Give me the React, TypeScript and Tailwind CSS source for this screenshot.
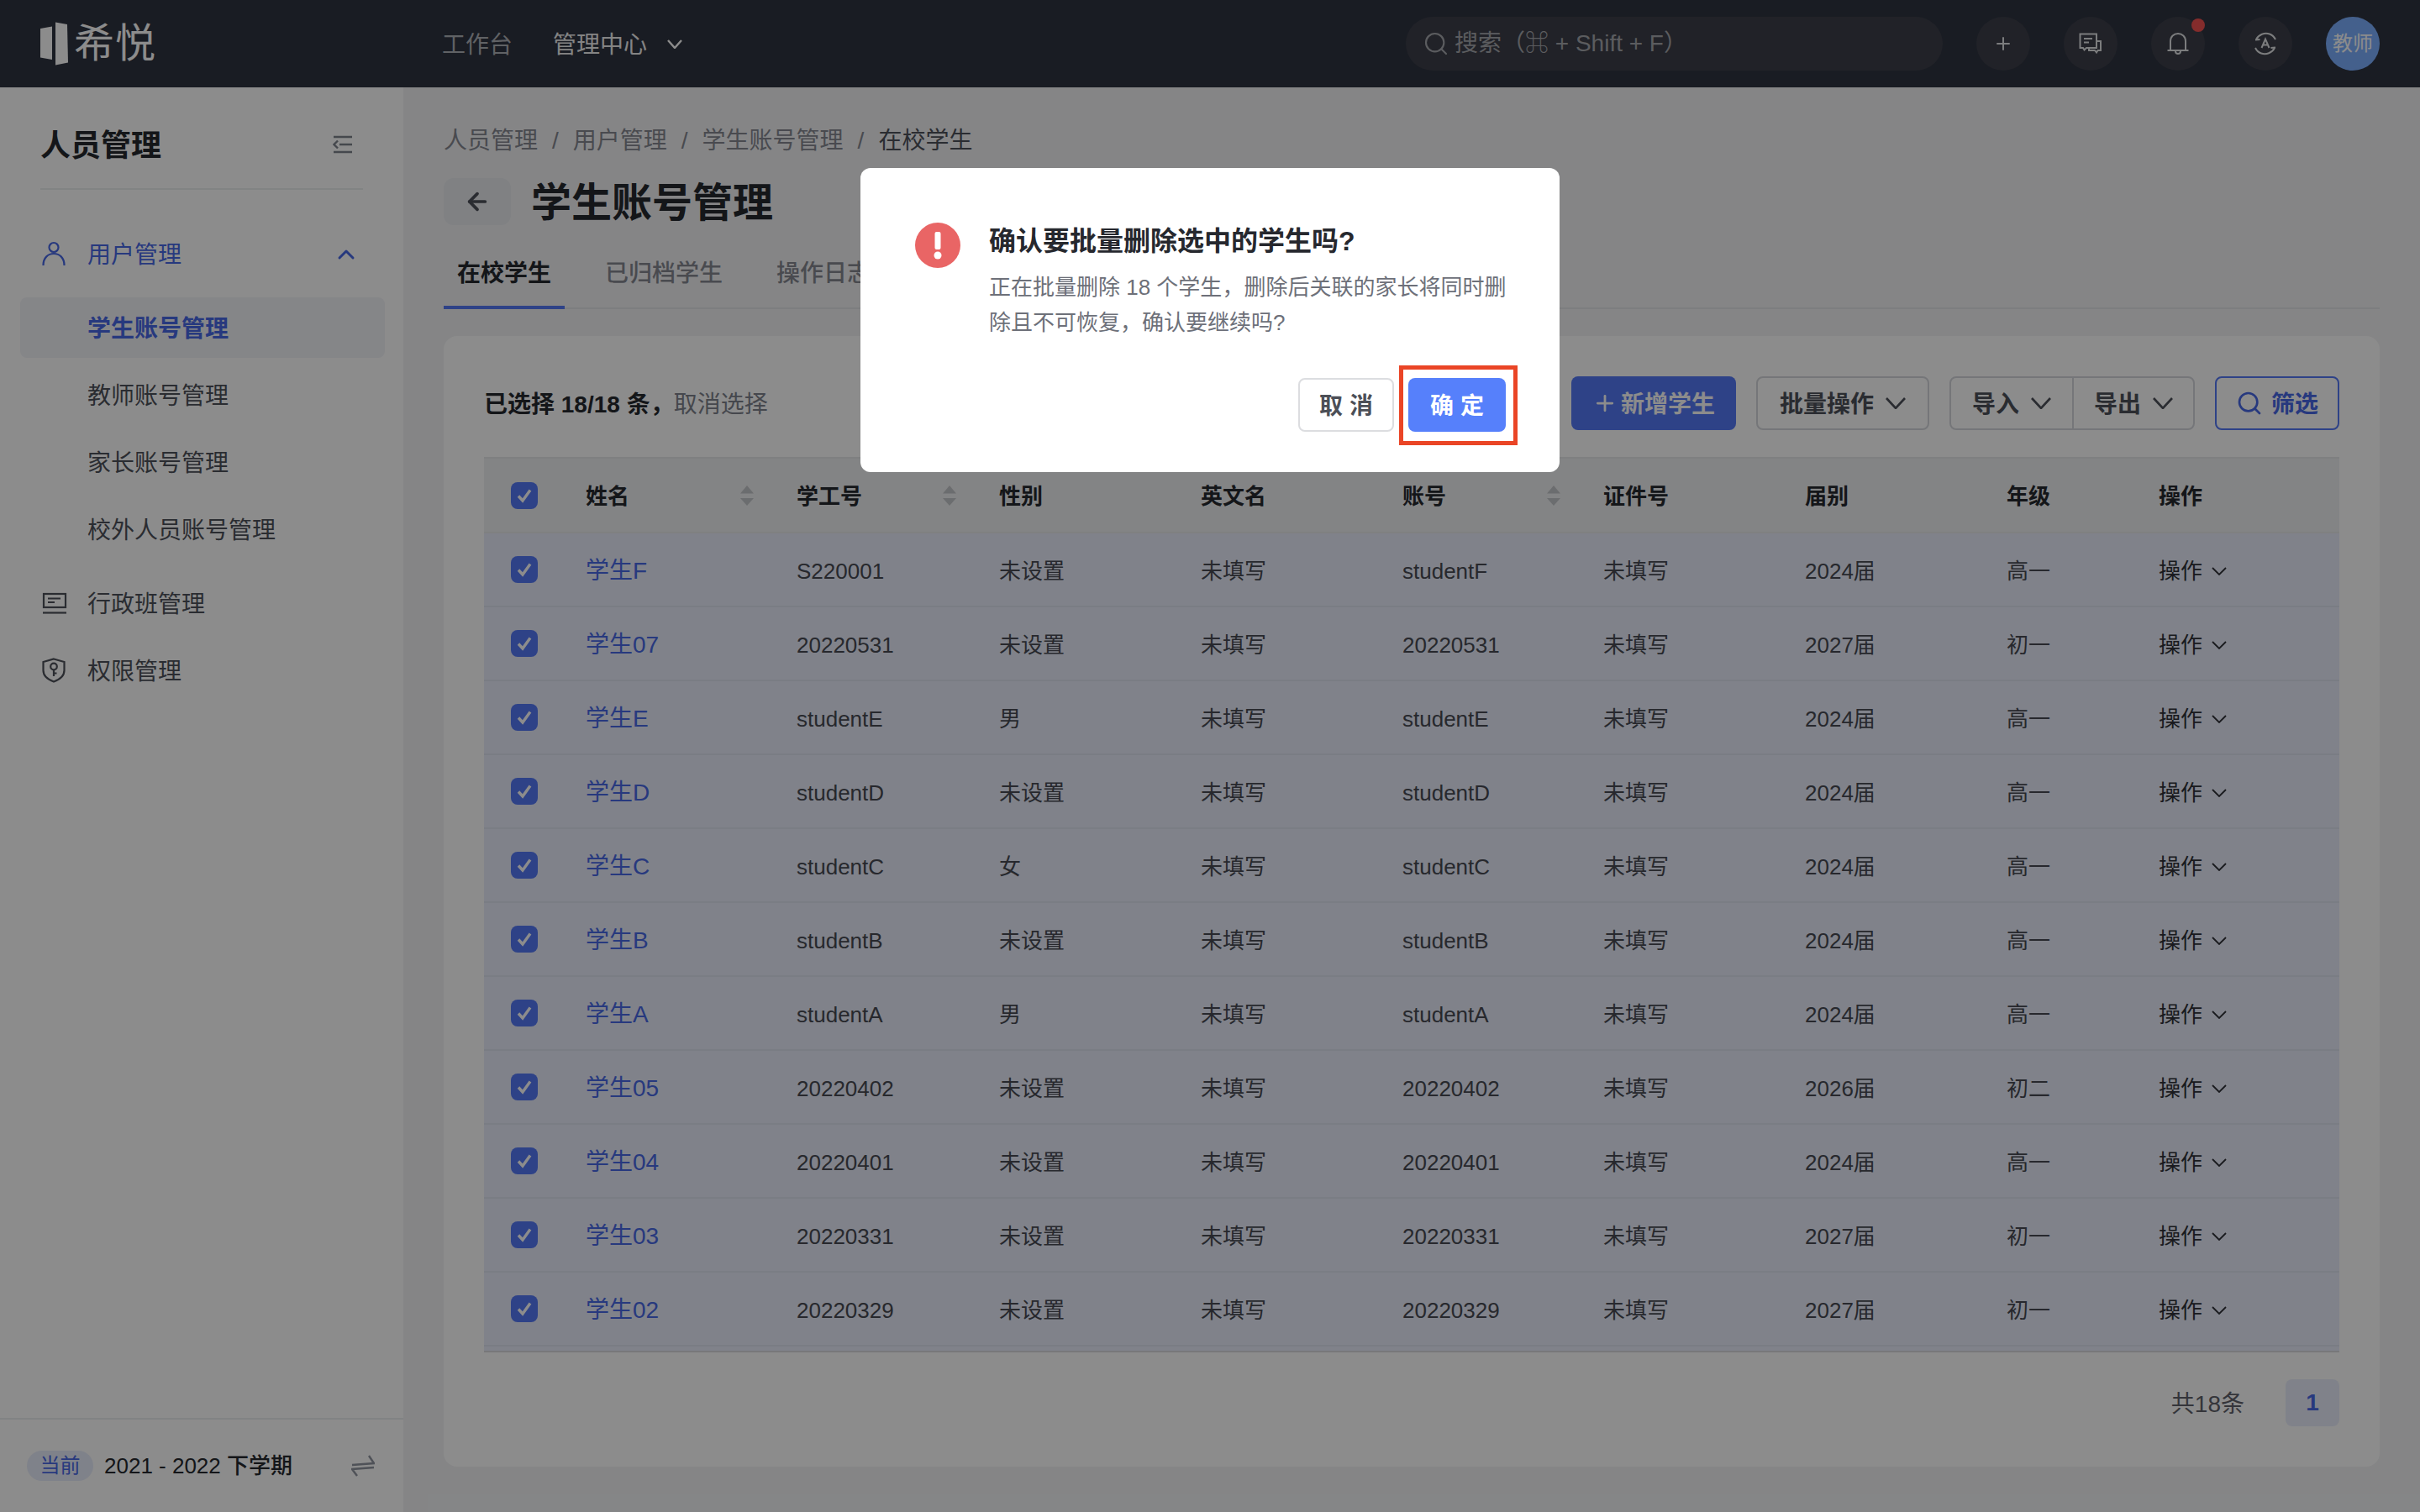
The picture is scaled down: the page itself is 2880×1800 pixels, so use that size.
import { ChevronUp, Plus, Search, ArrowLeft } from "lucide-react";

const COMMA = "\uFF0C";

const students = [
  { name: "学生F", no: "S220001", gender: "未设置", account: "studentF", year: "2024届", grade: "高一" },
  { name: "学生07", no: "20220531", gender: "未设置", account: "20220531", year: "2027届", grade: "初一" },
  { name: "学生E", no: "studentE", gender: "男", account: "studentE", year: "2024届", grade: "高一" },
  { name: "学生D", no: "studentD", gender: "未设置", account: "studentD", year: "2024届", grade: "高一" },
  { name: "学生C", no: "studentC", gender: "女", account: "studentC", year: "2024届", grade: "高一" },
  { name: "学生B", no: "studentB", gender: "未设置", account: "studentB", year: "2024届", grade: "高一" },
  { name: "学生A", no: "studentA", gender: "男", account: "studentA", year: "2024届", grade: "高一" },
  { name: "学生05", no: "20220402", gender: "未设置", account: "20220402", year: "2026届", grade: "初二" },
  { name: "学生04", no: "20220401", gender: "未设置", account: "20220401", year: "2024届", grade: "高一" },
  { name: "学生03", no: "20220331", gender: "未设置", account: "20220331", year: "2027届", grade: "初一" },
  { name: "学生02", no: "20220329", gender: "未设置", account: "20220329", year: "2027届", grade: "初一" },
];

const gridCols = "grid grid-cols-[121px_251px_241px_240px_240px_239px_240px_240px_181px_1fr] items-center [&>span]:pt-[4px]";

const Chevron = ({ w, h, sw, className }: { w: number; h: number; sw: number; className?: string }) => (
  <svg width={w} height={h} viewBox={`0 0 ${w} ${h}`} fill="none" stroke="currentColor" strokeWidth={sw} className={className}>
    <path d={`M1 1 L${w / 2} ${h - 1} L${w - 1} 1`} />
  </svg>
);

const Checkbox = () => (
  <div className="ml-[32px] flex h-[32px] w-[32px] items-center justify-center rounded-[8px] bg-[#5478f6]">
    <svg width="20" height="20" viewBox="0 0 20 20" fill="none" stroke="#fff" strokeWidth="3.4">
      <path d="M3 10.5 L8 16 L17 3.5" />
    </svg>
  </div>
);

const SortIcon = () => (
  <svg width="16" height="24" viewBox="0 0 16 24" fill="#c4c6ca">
    <path d="M8 0 L16 9.5 L0 9.5 Z" />
    <path d="M0 15 L16 15 L8 24 Z" />
  </svg>
);

const HeadCell = ({ label, sort }: { label: string; sort?: boolean }) => (
  <div className={sort ? "flex items-center justify-between pr-[51px]" : ""}>
    <span className="inline-block pt-[4px]">{label}</span>
    {sort && <SortIcon />}
  </div>
);

const RoundBtn = ({ children }: { children: React.ReactNode }) => (
  <div className="relative flex h-[64px] w-[64px] items-center justify-center rounded-full bg-[#3c3f49]">
    {children}
  </div>
);

const Logo = () => (
  <div className="flex w-[480px] items-center pl-[48px]">
    <svg width="34" height="52" viewBox="0 0 34 52" fill="#fff">
      <path d="M0 8 L14 5.5 L14 45 L0 42.5 Z" />
      <path d="M18 0.5 L32 3 L33 48.5 L18 51.5 Z" />
    </svg>
    <span className="ml-[6px] text-[48px] leading-none tracking-[1px] text-white">希悦</span>
  </div>
);

const Header = () => (
  <header className="flex h-[104px] items-center bg-[#2f3340] pr-[48px]">
    <div className="-mr-[1px] flex-none">
      <Logo />
    </div>
    <div className="flex flex-1 items-center">
      <span className="ml-[47px] pt-[4px] text-[28px] text-[#b0b2b8]">工作台</span>
      <span className="ml-[48px] pt-[4px] text-[28px] text-[#f0f0f0]">管理中心</span>
      <Chevron w={18} h={11} sw={2.4} className="ml-[24px] text-white" />
    </div>
    <div className="mr-[40px] flex h-[64px] w-[639px] items-center rounded-full bg-[#3c3f49] pl-[20px] text-[28px] text-[#a6a8ae]">
      <Search className="h-[32px] w-[32px]" strokeWidth={1.6} />
      <span className="ml-[6px]">{"搜索\uFF08⌘ + Shift + F\uFF09"}</span>
    </div>
    <div className="flex items-center gap-[40px] text-[#e2e3e6]">
      <RoundBtn>
        <Plus className="h-[24px] w-[24px]" strokeWidth={2} />
      </RoundBtn>
      <RoundBtn>
        <svg width="28" height="26" viewBox="0 0 28 26" fill="none" stroke="currentColor" strokeWidth="2">
          <path d="M1.5 1.5 H21 V18 H9 L6.5 20.5 L5 18 H1.5 Z" />
          <path d="M21 10 H26 V21 H22.5 L21 23.5 L19 21 H12 V18" />
          <path d="M6 7 H16 M6 11.5 H12" />
        </svg>
      </RoundBtn>
      <RoundBtn>
        <svg width="28" height="28" viewBox="0 0 28 28" fill="none" stroke="currentColor" strokeWidth="2">
          <path d="M5 22 V11 C5 5.5 9 2 14 2 C19 2 23 5.5 23 11 V22" />
          <path d="M1.5 22 H26.5" />
          <path d="M11 23 C11 27 17 27 17 23" />
        </svg>
        <div className="absolute top-[2px] right-0 h-[16px] w-[16px] rounded-full bg-[#f05050]" />
      </RoundBtn>
      <RoundBtn>
        <svg width="28" height="28" viewBox="0 0 28 28" fill="none" stroke="currentColor" strokeWidth="2">
          <path d="M3 9 C6 3 13 0.5 19 2.5 C22 3.5 24.5 6 26 9" />
          <path d="M25 19 C22 25 15 27.5 9 25.5 C6 24.5 3.5 22 2 19" />
          <path d="M2 9.5 L7.5 9 M26 18.5 L20.5 19" />
          <path d="M9.5 19 L14 8.5 L18.5 19 M11 15.5 H17" />
        </svg>
      </RoundBtn>
      <div className="flex h-[64px] w-[64px] items-center justify-center rounded-full bg-[#7db0ff] text-[24px] text-white">
        教师
      </div>
    </div>
  </header>
);

const Sidebar = () => (
  <aside className="flex h-[1696px] w-[480px] flex-none flex-col bg-white">
    <div className="mx-[48px] flex items-center justify-between border-b-2 border-[#eceef1] pt-[43px] pb-[27px]">
      <span className="pt-[4px] text-[36px] leading-[46px] font-semibold text-[#26282e]">人员管理</span>
      <svg width="24" height="22" viewBox="0 0 24 22" fill="none" stroke="#7f838c" strokeWidth="2.4" className="mr-[12px]">
        <path d="M1 2 H23 M8 11 H23 M1 20 H23" />
        <path d="M6 6.5 L1.5 11 L6 15.5" />
      </svg>
    </div>
    <nav className="mt-[40px] flex flex-col px-[24px] text-[28px] text-[#4e515a] [&_span]:pt-[4px]">
      <div className="flex h-[72px] items-center text-[#4868e6]">
        <div className="flex w-[80px] pl-[26px]">
          <svg width="28" height="30" viewBox="0 0 28 30" fill="none" stroke="currentColor" strokeWidth="2.2">
            <circle cx="14" cy="7.5" r="5.5" />
            <path d="M1.5 29 C1.5 20 7 15 14 15 C21 15 26.5 20 26.5 29" />
          </svg>
        </div>
        <span>用户管理</span>
        <ChevronUp className="mt-[2px] mr-[28px] ml-auto h-[32px] w-[32px]" strokeWidth={2.2} />
      </div>
      <div className="mt-[16px] flex h-[72px] w-[434px] items-center rounded-[8px] bg-[#f3f4f8] pt-[4px] pl-[80px] font-semibold text-[#4868e6]">
        学生账号管理
      </div>
      <div className="mt-[8px] flex h-[72px] items-center pt-[4px] pl-[80px]">教师账号管理</div>
      <div className="mt-[8px] flex h-[72px] items-center pt-[4px] pl-[80px]">家长账号管理</div>
      <div className="mt-[8px] flex h-[72px] items-center pt-[4px] pl-[80px]">校外人员账号管理</div>
      <div className="mt-[16px] flex h-[72px] items-center">
        <div className="flex w-[80px] pl-[26px]">
          <svg width="30" height="26" viewBox="0 0 30 26" fill="none" stroke="currentColor" strokeWidth="2.2">
            <rect x="2" y="2" width="26" height="16" />
            <path d="M7 7.5 H22 M7 12 H15" />
            <path d="M1 24.5 H29" />
          </svg>
        </div>
        <span>行政班管理</span>
      </div>
      <div className="mt-[8px] flex h-[72px] items-center">
        <div className="flex w-[80px] pl-[26px]">
          <svg width="28" height="30" viewBox="0 0 28 30" fill="none" stroke="currentColor" strokeWidth="2.2">
            <path d="M14 1.5 L26.5 5 V15 C26.5 22 21 26 14 28.5 C7 26 1.5 22 1.5 15 V5 Z" />
            <circle cx="14" cy="10.5" r="3.8" />
            <path d="M14 14.5 V22 M14 18.5 H17.5" />
          </svg>
        </div>
        <span>权限管理</span>
      </div>
    </nav>
    <div className="mt-auto flex h-[112px] items-center justify-between border-t-2 border-[#eceef1] px-[32px]">
      <div className="flex items-center">
        <span className="flex h-[36px] w-[79px] items-center justify-center rounded-full bg-[#e8edfb] text-[24px] text-[#4868e6]">
          当前
        </span>
        <span className="ml-[13px] text-[26px] font-medium text-[#26282e]">2021 - 2022 下学期</span>
      </div>
      <svg width="28" height="26" viewBox="0 0 28 26" fill="none" stroke="#9095a0" strokeWidth="2.4" className="mr-[2px]">
        <path d="M1 12 L27 10 L21 1" />
        <path d="M27 15 L1 17 L7 25" />
      </svg>
    </div>
  </aside>
);

const OutlineBtn = ({ label, className }: { label: string; className: string }) => (
  <div className={"flex h-full items-center justify-center " + className}>
    <span className="pt-[4px]">{label}</span>
    <Chevron w={24} h={14} sw={2.6} className="ml-[14px]" />
  </div>
);

const Toolbar = () => (
  <div className="flex h-[64px] items-center justify-between">
    <div className="pt-[4px] text-[28px] font-semibold text-[#26282e]">
      已选择 18/18 条{COMMA}
      <span className="font-normal text-[#7e828c]">取消选择</span>
    </div>
    <div className="flex h-full items-center gap-[24px] text-[28px] font-semibold text-[#4e515a]">
      <div className="flex h-full w-[196px] items-center justify-center rounded-[8px] bg-[#5478f6] text-white">
        <Plus className="mr-[4px] h-[30px] w-[30px]" strokeWidth={2.2} />
        <span className="pt-[4px]">新增学生</span>
      </div>
      <OutlineBtn label="批量操作" className="w-[206px] rounded-[8px] border-2 border-[#d6d8dd]" />
      <div className="flex h-full w-[292px] rounded-[8px] border-2 border-[#d6d8dd]">
        <OutlineBtn label="导入" className="w-[146px] border-r-2 border-[#d6d8dd]" />
        <OutlineBtn label="导出" className="flex-1" />
      </div>
      <div className="flex h-full w-[148px] items-center justify-center rounded-[8px] border-2 border-[#5478f6] text-[#4868e6]">
        <Search className="mr-[10px] h-[32px] w-[32px]" strokeWidth={2} />
        <span className="pt-[4px]">筛选</span>
      </div>
    </div>
  </div>
);

const StudentTable = () => (
  <div className="mt-[32px] text-[26px]">
    <div className={gridCols + " h-[91px] border-y-2 border-[#e8e9ec] bg-[#eff0f2] font-semibold text-[#26282e]"}>
      <Checkbox />
      <HeadCell label="姓名" sort />
      <HeadCell label="学工号" sort />
      <HeadCell label="性别" />
      <HeadCell label="英文名" />
      <HeadCell label="账号" sort />
      <HeadCell label="证件号" />
      <HeadCell label="届别" />
      <HeadCell label="年级" />
      <HeadCell label="操作" />
    </div>
    {students.map((s) => (
      <div key={s.name} className={gridCols + " h-[88px] border-b-2 border-[#dfe3f0] bg-[#e9edfb] text-[#474a52]"}>
        <Checkbox />
        <span className="text-[28px] text-[#4868e6]">{s.name}</span>
        <span>{s.no}</span>
        <span>{s.gender}</span>
        <span>未填写</span>
        <span>{s.account}</span>
        <span>未填写</span>
        <span>{s.year}</span>
        <span>{s.grade}</span>
        <div className="flex items-center text-[#2f3137]">
          <span className="pt-[4px]">操作</span>
          <Chevron w={18} h={10} sw={1.8} className="mt-[4px] ml-[11px]" />
        </div>
      </div>
    ))}
    <div className="h-[7px] border-b-2 border-[#dadbdf] bg-[#e9edfb]" />
  </div>
);

const Main = () => (
  <main className="min-w-0 flex-1 px-[48px] pt-[42px]">
    <div className="flex h-[40px] items-center pt-[4px] text-[28px] text-[#858891]">
      人员管理<span className="mx-[17px]">/</span>用户管理<span className="mx-[17px]">/</span>学生账号管理
      <span className="mx-[17px]">/</span>
      <span className="text-[#4e515a]">在校学生</span>
    </div>
    <div className="mt-[26px] flex h-[56px] items-center">
      <div className="flex h-[56px] w-[80px] items-center justify-center rounded-[12px] bg-[#e9ebee]">
        <ArrowLeft className="h-[32px] w-[32px] text-[#4e515a]" strokeWidth={2.8} />
      </div>
      <h1 className="ml-[24px] pt-[4px] text-[48px] font-bold text-[#26282e]">学生账号管理</h1>
    </div>
    <div className="mt-[28px] flex h-[72px] gap-[32px] border-b-2 border-[#e3e5e9] text-[28px] text-[#858891]">
      <div className="-mb-[2px] h-[72px] border-b-4 border-[#5478f6] px-[16px] pt-[2px] leading-[56px] font-semibold text-[#26282e]">
        在校学生
      </div>
      <div className="px-[16px] pt-[2px] leading-[56px] font-medium">已归档学生</div>
      <div className="px-[16px] pt-[2px] leading-[56px] font-medium">操作日志</div>
    </div>
    <section className="mt-[32px] h-[1346px] rounded-[16px] bg-white px-[48px] pt-[48px]">
      <Toolbar />
      <StudentTable />
      <div className="mt-[32px] flex h-[56px] items-center justify-end text-[28px] text-[#5f626b]">
        <span className="mr-[49px] pt-[4px]">共18条</span>
        <div className="flex h-[56px] w-[64px] items-center justify-center rounded-[8px] bg-[#e9edfb] font-bold text-[#4868e6]">
          1
        </div>
      </div>
    </section>
  </main>
);

const ConfirmDialog = () => (
  <div className="absolute inset-0 flex justify-center bg-black/45 pt-[200px]">
    <div className="h-[362px] w-[832px] rounded-[12px] bg-white pt-[65px] pr-[64px] pl-[65px]">
      <div className="flex">
        <svg width="54" height="54" viewBox="0 0 54 54" className="flex-none">
          <circle cx="27" cy="27" r="27" fill="#e96565" />
          <rect x="23.5" y="11" width="7" height="21" rx="2" fill="#fff" />
          <circle cx="27" cy="39" r="4.5" fill="#fff" />
        </svg>
        <div className="ml-[34px] min-w-0 flex-1">
          <div className="text-[32px] leading-[44px] font-semibold whitespace-nowrap text-[#26282e]">
            确认要批量删除选中的学生吗?
          </div>
          <p className="mt-[12px] text-[26px] leading-[42px] whitespace-nowrap text-[#6d7079]">
            正在批量删除 18 个学生{COMMA}删除后关联的家长将同时删
            <br />
            除且不可恢复{COMMA}确认要继续吗?
          </p>
        </div>
      </div>
      <div className="mt-[45px] flex justify-end gap-[17px] text-[28px] font-bold">
        <div className="flex h-[64px] w-[114px] items-center justify-center rounded-[8px] border-2 border-[#dcdde0] pt-[4px] text-[#4c4f57]">
          取 消
        </div>
        <div className="relative flex h-[64px] w-[116px] items-center justify-center rounded-[8px] bg-[#5680fb] pt-[4px] text-white">
          确 定
          <div className="absolute -top-[15px] -right-[14px] -bottom-[16px] -left-[11px] border-[5px] border-[#ea4526]" />
        </div>
      </div>
    </div>
  </div>
);

export default function App() {
  return (
    <div className="relative h-[1800px] w-[2880px] overflow-hidden bg-[#f2f3f5] font-['Liberation_Sans','Noto_Sans_CJK_SC',sans-serif]">
      <Header />
      <div className="flex">
        <Sidebar />
        <Main />
      </div>
      <ConfirmDialog />
    </div>
  );
}
